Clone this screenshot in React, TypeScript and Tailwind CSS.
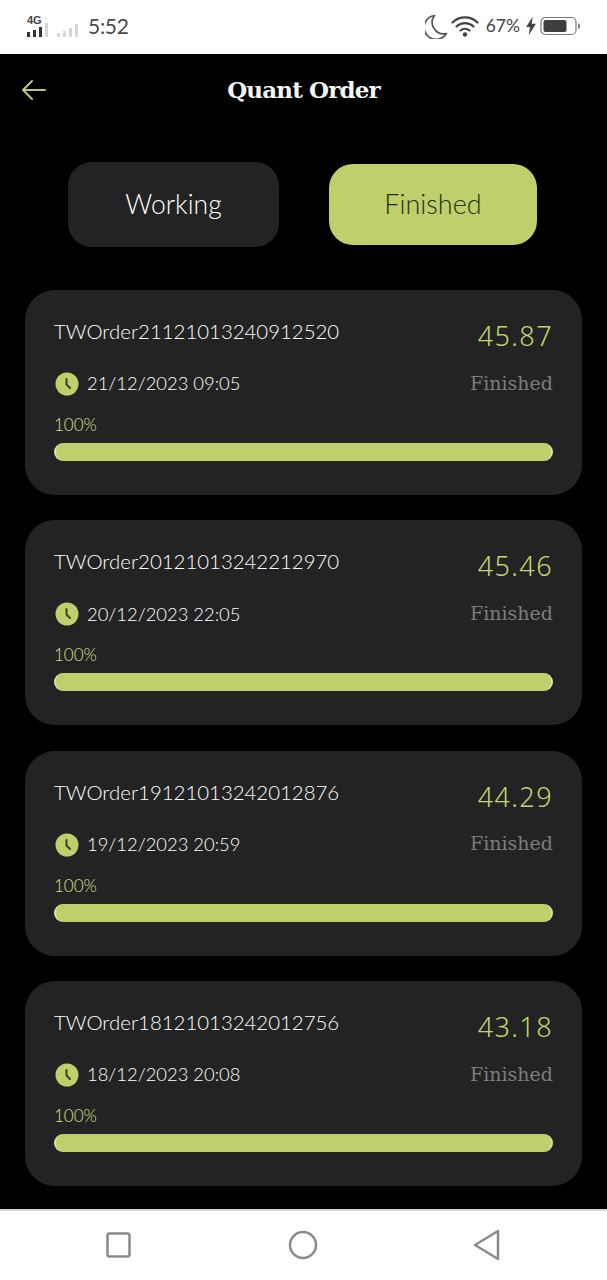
import React from "react";

const orders = [
  { id: "TWOrder21121013240912520", amount: "45.87", date: "21/12/2023 09:05" },
  { id: "TWOrder20121013242212970", amount: "45.46", date: "20/12/2023 22:05" },
  { id: "TWOrder19121013242012876", amount: "44.29", date: "19/12/2023 20:59" },
  { id: "TWOrder18121013242012756", amount: "43.18", date: "18/12/2023 20:08" },
];

const Clock = () => (
  <svg width="24" height="24" viewBox="0 0 24 24" className="ml-[1px] shrink-0">
    <circle cx="12" cy="12" r="11.5" fill="#bdd06b" />
    <path d="M11.5 7v5.5l3.5 3.5" fill="none" stroke="#3a4420" strokeWidth="2" strokeLinecap="round" strokeLinejoin="round" />
  </svg>
);

function Card({ id, amount, date }: { id: string; amount: string; date: string }) {
  return (
    <div className="h-[205px] rounded-[30px] bg-[#232323] px-[29px] pt-[27px]">
      <div className="flex h-[32px] items-start justify-between">
        <span className="text-[20.4px] font-light leading-[28px] text-white [font-family:Lato,sans-serif]">{id}</span>
        <span className="mt-[3px] text-[27px] font-light leading-[32px] tracking-[1.4px] text-[#c4d672] [font-family:'Noto_Sans',sans-serif]">{amount}</span>
      </div>
      <div className="mt-[20px] flex h-[30px] items-center justify-between">
        <div className="flex items-center gap-[8px]">
          <Clock />
          <span className="text-[18.4px] font-light text-white [font-family:Lato,sans-serif]">{date}</span>
        </div>
        <span className="-translate-y-[1px] text-[19px] text-[#7d7d7d] [font-family:'DejaVu_Serif',serif]">Finished</span>
      </div>
      <div className="mt-[16px] h-[20px] text-[17px] font-light leading-[20px] text-[#d2e08c] [font-family:Lato,sans-serif]">100%</div>
      <div className="mt-[8px] h-[18px] rounded-full border-l-2 border-r-2 border-[#d8e2a4] bg-[#bdd06b]" />
    </div>
  );
}

export default function App() {
  return (
    <div className="flex h-[1280px] w-[607px] flex-col overflow-hidden bg-black">
      <div className="flex h-[54px] shrink-0 items-center justify-between bg-white pb-[2px] pl-[26px] pr-[26px]">
        <div className="flex items-center">
          <svg width="56" height="24" viewBox="0 0 56 24">
            <text x="1" y="10" fontSize="11" fontWeight="700" fill="#444" fontFamily="Liberation Sans">4G</text>
            <g fill="#333">
              <rect x="1" y="18" width="3" height="5" />
              <rect x="7" y="16" width="3" height="7" />
              <rect x="13" y="13" width="3" height="10" />
            </g>
            <g fill="#d6d6d6">
              <rect x="19" y="9" width="3" height="14" />
              <rect x="31" y="19" width="3" height="4" />
              <rect x="37" y="17" width="3" height="6" />
              <rect x="43" y="14" width="3" height="9" />
              <rect x="49" y="10" width="3" height="13" />
            </g>
          </svg>
          <span className="ml-[6px] text-[21px] leading-[24px] tracking-[-0.3px] text-[#4a4a4a] [font-family:Lato,sans-serif]">5:52</span>
        </div>
        <div className="flex items-center">
          <svg width="23" height="25" viewBox="0 0 23 25" className="mr-[3px]">
            <path d="M9.5 1.5A12 12 0 1 0 21.5 19.5 11.5 11.5 0 0 1 9.5 1.5Z" fill="none" stroke="#555" strokeWidth="1.7" strokeLinejoin="round" />
          </svg>
          <svg width="28" height="22" viewBox="0 0 28 22">
            <g fill="none" stroke="#444" strokeWidth="2.2" strokeLinecap="round">
              <path d="M1.5 7.5a18 18 0 0 1 25 0" />
              <path d="M5.5 11.5a12.5 12.5 0 0 1 17 0" />
              <path d="M9.5 15.5a7 7 0 0 1 9 0" />
            </g>
            <circle cx="14" cy="19.5" r="2.2" fill="#444" />
          </svg>
          <span className="ml-[7px] text-[17.5px] leading-[20px] text-[#444] [font-family:Lato,sans-serif]">67%</span>
          <svg width="12" height="20" viewBox="0 0 11 18" className="ml-[5px]">
            <path d="M7 0.5 1 10h3.5L3.5 17.5 10 7H6.2Z" fill="#444" />
          </svg>
          <svg width="41" height="20" viewBox="0 0 41 20" className="ml-[3px]">
            <rect x="1" y="1.5" width="35" height="17" rx="4.5" fill="none" stroke="#777" strokeWidth="1.2" />
            <rect x="3.5" y="4" width="23" height="12" rx="2" fill="#3e3e3e" />
            <path d="M38 7c1.300.5 2 1.500 2 3s-.7 2.500-2 3Z" fill="#777" />
          </svg>
        </div>
      </div>

      <div className="relative flex h-[73px] shrink-0 items-center justify-center pb-[2px]">
        <svg width="26" height="22" viewBox="0 0 26 22" fill="none" stroke="#b9c878" strokeWidth="2" strokeLinecap="round" strokeLinejoin="round" className="absolute left-[21px] top-[25px]">
          <path d="M24 11H2M11 2l-9 9 9 9" />
        </svg>
        <h1 className="text-[23px] font-bold leading-[30px] tracking-[-0.85px] text-[#f5f5f5] [font-family:'DejaVu_Serif',serif]">Quant Order</h1>
      </div>

      <div className="flex h-[163px] shrink-0 items-start pl-[68px] pt-[35px]">
        <button className="flex h-[85px] w-[211px] items-center justify-center rounded-[24px] bg-[#232323] text-[26.5px] font-light text-white [font-family:Lato,sans-serif]">Working</button>
        <button className="ml-[50px] mt-[2px] flex h-[81px] w-[208px] items-center justify-center rounded-[24px] bg-[#bdd06b] text-[27px] font-light text-[#262e10] [font-family:Lato,sans-serif]">Finished</button>
      </div>

      <div className="flex min-h-0 flex-1 flex-col gap-[25.33px] px-[25px]">
        {orders.map((o) => (
          <Card key={o.id} {...o} />
        ))}
      </div>

      <div className="flex h-[71px] shrink-0 items-center border-t-2 border-[#d9d9d9] bg-white pb-[1px]">
        <div className="flex w-full items-center justify-between px-[106px]">
          <svg width="26" height="26" viewBox="0 0 26 26"><rect x="1.500" y="1.500" width="22" height="23" rx="2" fill="none" stroke="#8a8a8a" strokeWidth="2.5" /></svg>
          <svg width="30" height="30" viewBox="0 0 30 30"><circle cx="15" cy="15" r="13" fill="none" stroke="#8a8a8a" strokeWidth="2.5" /></svg>
          <svg width="28" height="32" viewBox="0 0 28 32"><path d="M25 2 2 16l23 14Z" fill="none" stroke="#8a8a8a" strokeWidth="2.5" strokeLinejoin="round" /></svg>
        </div>
      </div>
    </div>
  );
}
